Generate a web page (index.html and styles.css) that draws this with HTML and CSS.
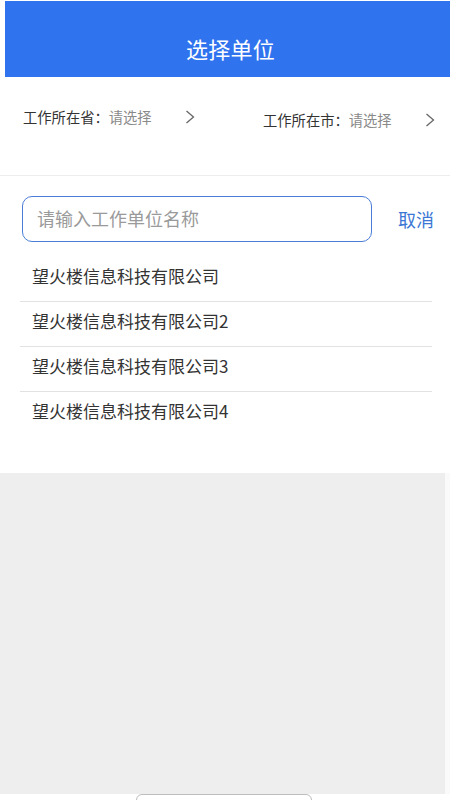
FILE: index.html
```html
<!DOCTYPE html>
<html lang="zh-CN">
<head>
<meta charset="utf-8">
<title>选择单位</title>
<link rel="stylesheet" href="styles.css">
</head>
<body>
<div class="page">
  <header class="header">
    <h1 class="title">选择单位</h1>
  </header>
  <section class="pickers">
    <div class="picker">
      <span class="label">工作所在省：</span><span class="value">请选择</span>
      <svg class="chev" width="10" height="14" viewBox="0 0 10 14"><path d="M1.5 1 L8.5 7 L1.5 13" fill="none" stroke="#666" stroke-width="1.3"/></svg>
    </div>
    <div class="picker picker-right">
      <span class="label">工作所在市：</span><span class="value">请选择</span>
      <svg class="chev" width="10" height="14" viewBox="0 0 10 14"><path d="M1.5 1 L8.5 7 L1.5 13" fill="none" stroke="#666" stroke-width="1.3"/></svg>
    </div>
  </section>
  <section class="search">
    <div class="search-row">
      <div class="input">请输入工作单位名称</div>
      <span class="cancel">取消</span>
    </div>
    <ul class="list">
      <li class="item">望火楼信息科技有限公司</li>
      <li class="item">望火楼信息科技有限公司2</li>
      <li class="item">望火楼信息科技有限公司3</li>
      <li class="item">望火楼信息科技有限公司4</li>
    </ul>
  </section>
  <div class="rest"></div>
  <footer class="footer"><div class="home"></div></footer>
</div>
</body>
</html>
```

FILE: styles.css
```css
* { box-sizing: border-box; }
html, body { margin: 0; padding: 0; }
body {
  font-family: "Noto Sans CJK SC", "Noto Sans", sans-serif;
  background: #fff;
}
.page {
  width: 450px;
  height: 800px;
  display: flex;
  flex-direction: column;
  overflow: hidden;
}
.header {
  height: 76px;
  margin-left: 5px;
  margin-top: 1px;
  background: #2f73ef;
  display: flex;
  align-items: flex-start;
  justify-content: center;
}
.title {
  margin: 32px 0 0 6px;
  color: #fff;
  font-size: 22px;
  font-weight: 400;
  line-height: 30px;
  letter-spacing: 0.2px;
}
.pickers {
  height: 99px;
  background: #fff;
  border-bottom: 1px solid #ececec;
  display: flex;
  padding: 29px 8px 0 23px;
}
.picker {
  flex: none;
  display: flex;
  align-items: center;
  white-space: nowrap;
  height: 22px;
  font-size: 14.3px;
  line-height: 22px;
  width: 240px;
}
.picker-right { margin-top: 3px; width: auto; }
.label { color: #333; }
.value { color: #8a8a8a; }
.chev { flex: none; margin-left: 33px; }
.search {
  background: #fff;
  padding: 20px 18px 37px 20px;
}
.search-row {
  display: flex;
  align-items: center;
}
.input {
  flex: none;
  width: 350px;
  height: 46px;
  margin-left: 2px;
  border: 1.5px solid #4a7dd8;
  border-radius: 10px;
  padding-left: 14px;
  font-size: 18px;
  line-height: 42px;
  color: #9a9a9a;
}
.cancel {
  flex: none;
  white-space: nowrap;
  margin-left: 26px;
  font-size: 18px;
  color: #3b77d4;
}
.list {
  list-style: none;
  margin: 15px 0 0 0;
  padding: 0;
}
.item {
  height: 45px;
  padding: 7px 0 0 12px;
  font-size: 17px;
  line-height: 24px;
  color: #333;
  border-bottom: 1px solid #e2e2e2;
}
.item:last-child { border-bottom: none; height: 44px; }
.rest {
  flex: 1;
  background: #eeeeee;
  border-right: 5px solid #fafafa;
}
.footer {
  height: 6px;
  background: #fff;
}
.home {
  width: 176px;
  height: 12px;
  margin-left: 136px;
  border: 1px solid #bdbdbd;
  border-radius: 8px;
  background: #fff;
}
```
